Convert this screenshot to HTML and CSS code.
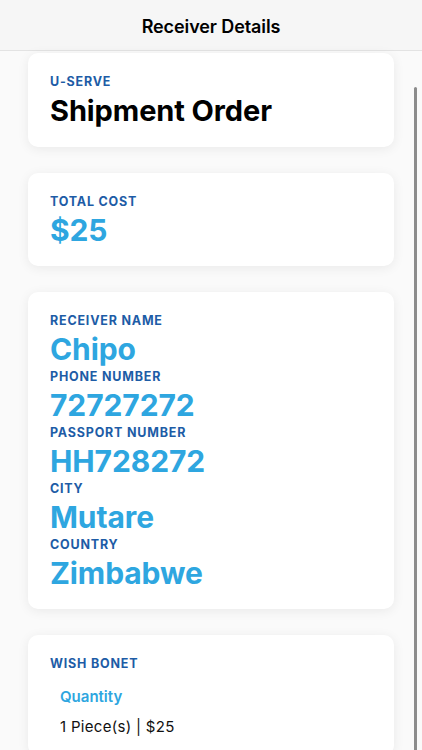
FILE: index.html
```html
<!DOCTYPE html>
<html lang="en">
<head>
    <meta charset="UTF-8">
    <meta name="viewport" content="width=device-width, initial-scale=1.0">
    <title>Receiver Details</title>
    <link rel="stylesheet" href="styles.css">
</head>
<body>

    <header class="top-bar">
        <h1>Receiver Details</h1>
    </header>

    <main class="content">
        <!-- Order -->
        <div class="card">
            <div class="label">U-SERVE</div>
            <div class="title">Shipment Order</div>
        </div>

        <!-- Cost -->
        <div class="card">
            <div class="label">TOTAL COST</div>
            <div class="value">$25</div>
        </div>

        <!-- Receiver -->
        <div class="card receiver">
            <div class="label">RECEIVER NAME</div>
            <div class="value">Chipo</div>
            <div class="label">PHONE NUMBER</div>
            <div class="value">72727272</div>
            <div class="label">PASSPORT NUMBER</div>
            <div class="value">HH728272</div>
            <div class="label">CITY</div>
            <div class="value">Mutare</div>
            <div class="label">COUNTRY</div>
            <div class="value">Zimbabwe</div>
        </div>

        <!-- Items -->
        <div class="card">
            <div class="label">WISH BONET</div>
            <div class="item">
                <div class="item-name">Quantity</div>
                <div class="item-info">1 Piece(s) | $25</div>
            </div>
        </div>
    </main>

    <div class="scroll-thumb"></div>

</body>
</html>
```

FILE: styles.css
```css
html, body {
    margin: 0;
    height: 100%;
    overflow: hidden;
}
body {
    font-family: Inter, "Noto Sans", sans-serif;
    background-color: #fafafa;
    color: #000;
}
.top-bar {
    height: 50px;
    background-color: #f6f6f6;
    border-bottom: 1px solid #e3e3e3;
    display: flex;
    align-items: center;
    justify-content: center;
}
.top-bar h1 {
    margin: 0;
    padding-top: 2px;
    font-size: 18px;
    font-weight: 600;
    letter-spacing: -0.1px;
}
.content {
    padding: 2px 28px 0;
}
.card {
    background-color: #fff;
    border-radius: 10px;
    padding: 21px 22px 18px;
    margin-bottom: 26px;
    box-shadow: 0 2px 12px rgba(0, 0, 0, 0.07);
}
.label {
    font-size: 12.5px;
    font-weight: 700;
    line-height: 16px;
    letter-spacing: 0.8px;
    color: #1d5ca6;
}
.title {
    margin-top: 3px;
    font-size: 29px;
    font-weight: 700;
    line-height: 36px;
    letter-spacing: -0.1px;
}
.value {
    margin-top: 3px;
    font-size: 30px;
    font-weight: 700;
    line-height: 35px;
    letter-spacing: -0.1px;
    color: #2ea6e0;
}
.receiver {
    padding-bottom: 16px;
}
.receiver .value {
    margin-bottom: 2px;
}
.item {
    padding: 15px 10px 0;
}
.item-name {
    font-size: 15px;
    font-weight: 600;
    line-height: 20px;
    color: #2ea6e0;
}
.item-info {
    margin-top: 10px;
    font-size: 15px;
    line-height: 20px;
    letter-spacing: 0.3px;
    color: #111;
}
/* overlay scroll indicator */
.scroll-thumb {
    position: absolute;
    top: 87px;
    right: 5px;
    width: 3px;
    height: 700px;
    border-radius: 2px;
    background-color: #8c8c8c;
}
```
